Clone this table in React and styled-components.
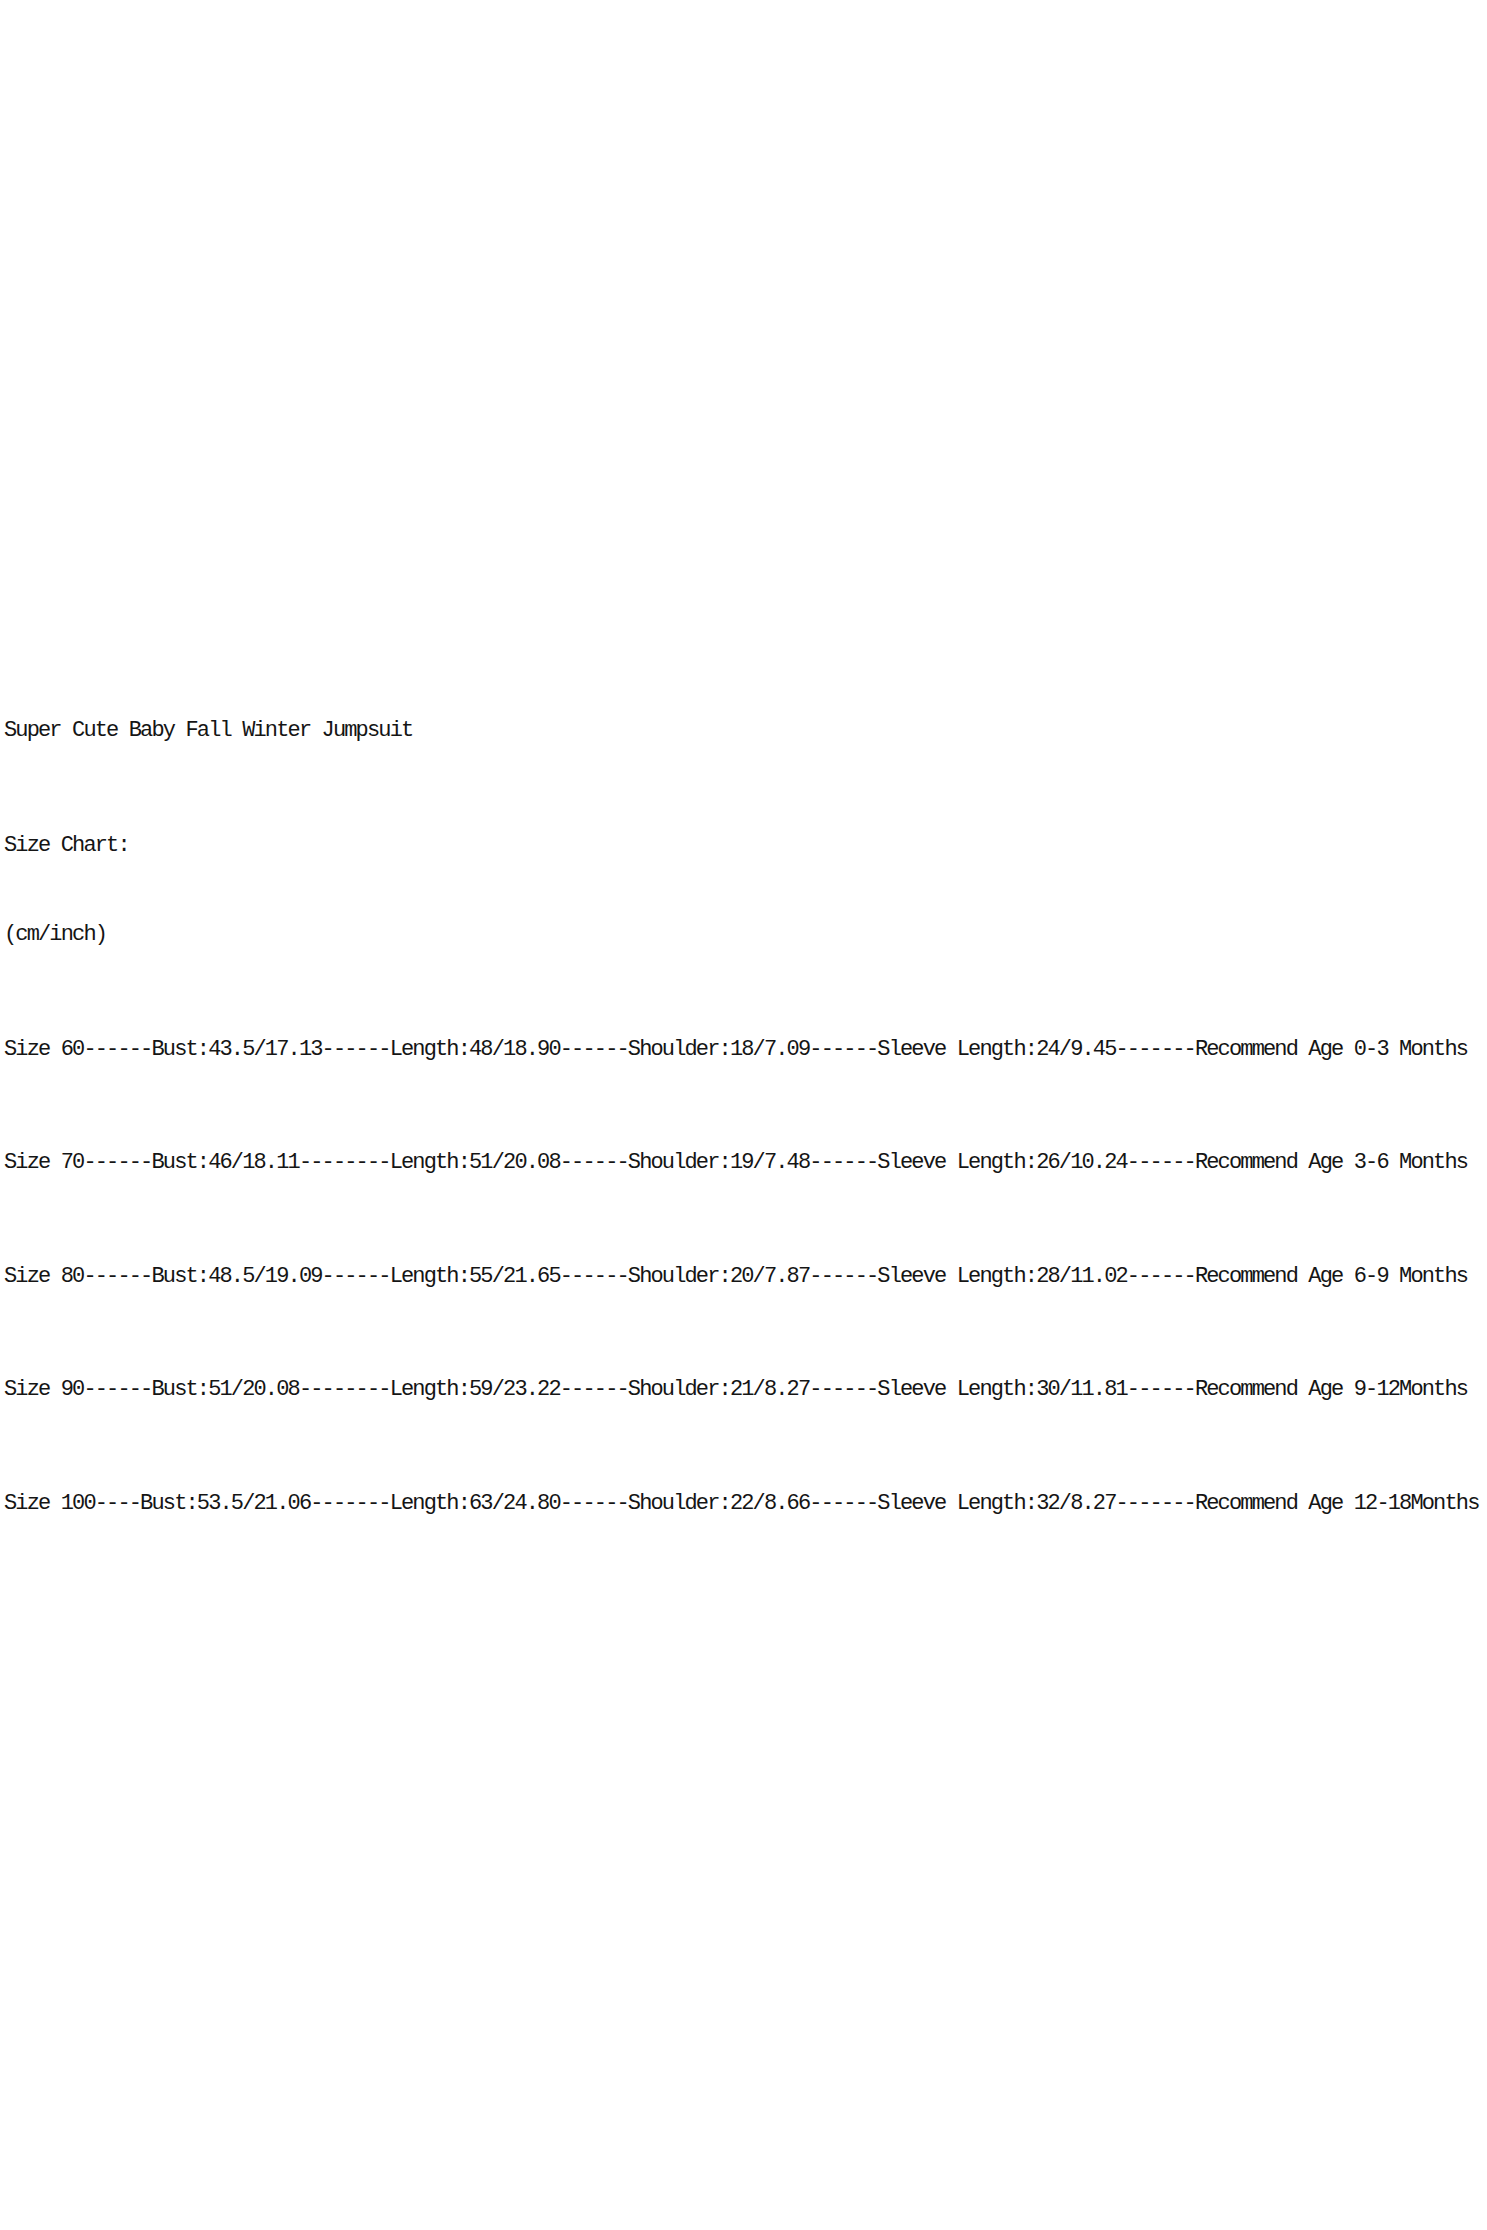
import styled, { createGlobalStyle } from 'styled-components';

const GlobalStyle = createGlobalStyle`
  html, body {
    margin: 0;
    padding: 0;
    background: #fff;
  }
`;

const Sheet = styled.div`
  width: 1487px;
  height: 2230px;
  box-sizing: border-box;
  padding: 719px 0 0 4px;
  display: flex;
  flex-direction: column;
  background: #fff;
  overflow: hidden;
`;

const Line = styled.p`
  margin: ${(p) => p.$gap || 0}px 0 0;
  height: 24px;
  line-height: 24px;
  font-family: "Liberation Mono", "DejaVu Sans Mono", monospace;
  font-size: 22px;
  letter-spacing: -1.86px;
  color: #151515;
  white-space: pre;
`;

const rows = [
  'Size 60------Bust:43.5/17.13------Length:48/18.90------Shoulder:18/7.09------Sleeve Length:24/9.45-------Recommend Age 0-3 Months',
  'Size 70------Bust:46/18.11--------Length:51/20.08------Shoulder:19/7.48------Sleeve Length:26/10.24------Recommend Age 3-6 Months',
  'Size 80------Bust:48.5/19.09------Length:55/21.65------Shoulder:20/7.87------Sleeve Length:28/11.02------Recommend Age 6-9 Months',
  'Size 90------Bust:51/20.08--------Length:59/23.22------Shoulder:21/8.27------Sleeve Length:30/11.81------Recommend Age 9-12Months',
  'Size 100----Bust:53.5/21.06-------Length:63/24.80------Shoulder:22/8.66------Sleeve Length:32/8.27-------Recommend Age 12-18Months',
];

export default function App() {
  return (
    <>
      <GlobalStyle />
      <Sheet>
        <Line>Super Cute Baby Fall Winter Jumpsuit</Line>
        <Line $gap={91}>Size Chart:</Line>
        <Line $gap={65}>(cm/inch)</Line>
        {rows.map((row, i) => (
          <Line key={i} $gap={i === 0 ? 91 : 89.4}>
            {row}
          </Line>
        ))}
      </Sheet>
    </>
  );
}
